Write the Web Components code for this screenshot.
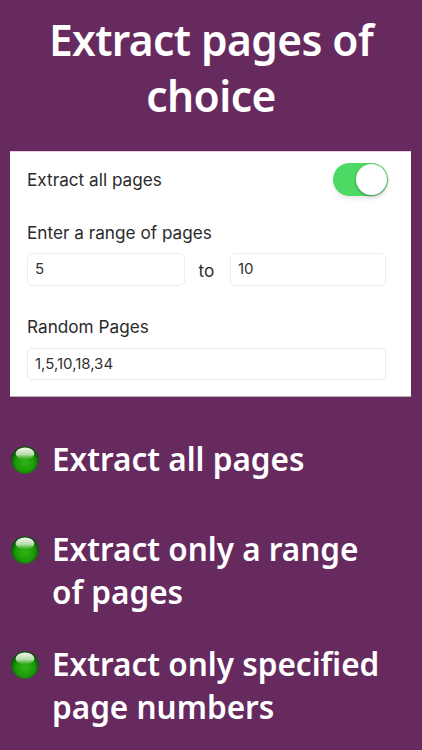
<!DOCTYPE html>
<html>
<head>
<meta charset="utf-8">
<title>Extract pages of choice</title>
<style>
  html, body { margin: 0; padding: 0; }
  body { width: 422px; height: 750px; overflow: hidden; background: #672a5f; font-family: "Noto Sans", sans-serif; }
</style>
</head>
<body>
<promo-screen>
  <span slot="title">Extract pages of choice</span>
  <pages-card slot="card"></pages-card>
  <feature-item style="height:90px">Extract all pages</feature-item>
  <feature-item style="height:115px">Extract only a range of pages</feature-item>
  <feature-item>Extract only specified page numbers</feature-item>
</promo-screen>

<script>
class PromoScreen extends HTMLElement {
  connectedCallback() {
    this.attachShadow({ mode: 'open' });
    this.shadowRoot.innerHTML = `
      <style>
        :host { display: block; color: #fff; }
        h1 {
          margin: 0;
          padding: 12px 20px 0;
          height: 139px;
          box-sizing: border-box;
          font: 600 42.5px/56px "Noto Sans", sans-serif;
          letter-spacing: -0.6px;
          text-align: center;
        }
        .list { padding: 40px 0 0 11px; }
      </style>
      <h1><slot name="title"></slot></h1>
      <slot name="card"></slot>
      <div class="list"><slot></slot></div>
    `;
  }
}

class PagesCard extends HTMLElement {
  connectedCallback() {
    this.attachShadow({ mode: 'open' });
    this.shadowRoot.innerHTML = `
      <style>
        :host {
          display: block;
          margin: 12px 11px 0 10px;
          height: 246px;
          box-sizing: border-box;
          padding: 11px 23px 0 17px;
          background: #fff;
          border-top: 1px solid #e6cfe2;
          border-bottom: 1px solid #b9b3b9;
          color: #2b2b2b;
          font: 400 17.2px/22px Inter, sans-serif;
        }
        .top { display: flex; align-items: center; justify-content: space-between; height: 33px; }
        .label { margin-top: 26px; height: 22px; }
        .range { display: flex; align-items: center; margin-top: 9px; }
        .to { width: 43px; padding-right: 2px; text-align: center; }
        .to span { display: block; margin-top: 2px; }
        .box {
          box-sizing: border-box;
          height: 33px;
          padding: 0 7px;
          border: 1px solid #ececec;
          border-radius: 5px;
          font-size: 15px;
          line-height: 29px;
          color: #333;
        }
        .a { width: 158px; }
        .b { width: 156px; }
        .c { width: 359px; margin-top: 10px; height: 32px; }
        .random { margin-top: 30px; }
      </style>
      <div class="top"><span>Extract all pages</span><on-switch></on-switch></div>
      <div class="label">Enter a range of pages</div>
      <div class="range">
        <div class="box a">5</div>
        <div class="to"><span>to</span></div>
        <div class="box b">10</div>
      </div>
      <div class="label random">Random Pages</div>
      <div class="box c">1,5,10,18,34</div>
    `;
  }
}

class OnSwitch extends HTMLElement {
  connectedCallback() {
    this.attachShadow({ mode: 'open' });
    this.shadowRoot.innerHTML = `
      <style>
        :host {
          display: flex;
          justify-content: flex-end;
          box-sizing: border-box;
          width: 55px;
          height: 33px;
          padding: 1px;
          border-radius: 17px;
          background: #4cd964;
          box-shadow: 0 4px 6px -2px rgba(0,0,0,.12);
        }
        i {
          width: 31px;
          height: 31px;
          border-radius: 50%;
          background: #fff;
          box-shadow: 0 1px 3px rgba(0,0,0,.35);
        }
      </style>
      <i></i>
    `;
  }
}

class FeatureItem extends HTMLElement {
  connectedCallback() {
    this.attachShadow({ mode: 'open' });
    this.shadowRoot.innerHTML = `
      <style>
        :host { display: flex; align-items: flex-start; }
        svg { flex: none; width: 28px; height: 28px; margin: 9px 13px 0 0; }
        .text { width: 345px; font: 600 31.5px/43px "Noto Sans", sans-serif; color: #fff; }
      </style>
      <svg viewBox="0 0 30 30">
        <defs>
          <radialGradient id="ball" cx="50%" cy="58%" r="52%">
            <stop offset="0" stop-color="#2fb512"/>
            <stop offset=".65" stop-color="#1c9a0a"/>
            <stop offset=".88" stop-color="#0f6f07"/>
            <stop offset="1" stop-color="#0a4f06"/>
          </radialGradient>
          <linearGradient id="shine" x1="0" y1="0" x2="0" y2="1">
            <stop offset="0" stop-color="#f4f8f1"/>
            <stop offset=".6" stop-color="#b4dba8"/>
            <stop offset="1" stop-color="#3cad22" stop-opacity=".5"/>
          </linearGradient>
        </defs>
        <circle cx="15" cy="15" r="14.8" fill="url(#ball)"/>
        <ellipse cx="15" cy="8" rx="10" ry="6.5" fill="url(#shine)"/>
      </svg>
      <div class="text"><slot></slot></div>
    `;
  }
}

customElements.define('promo-screen', PromoScreen);
customElements.define('pages-card', PagesCard);
customElements.define('on-switch', OnSwitch);
customElements.define('feature-item', FeatureItem);
</script>
</body>
</html>
